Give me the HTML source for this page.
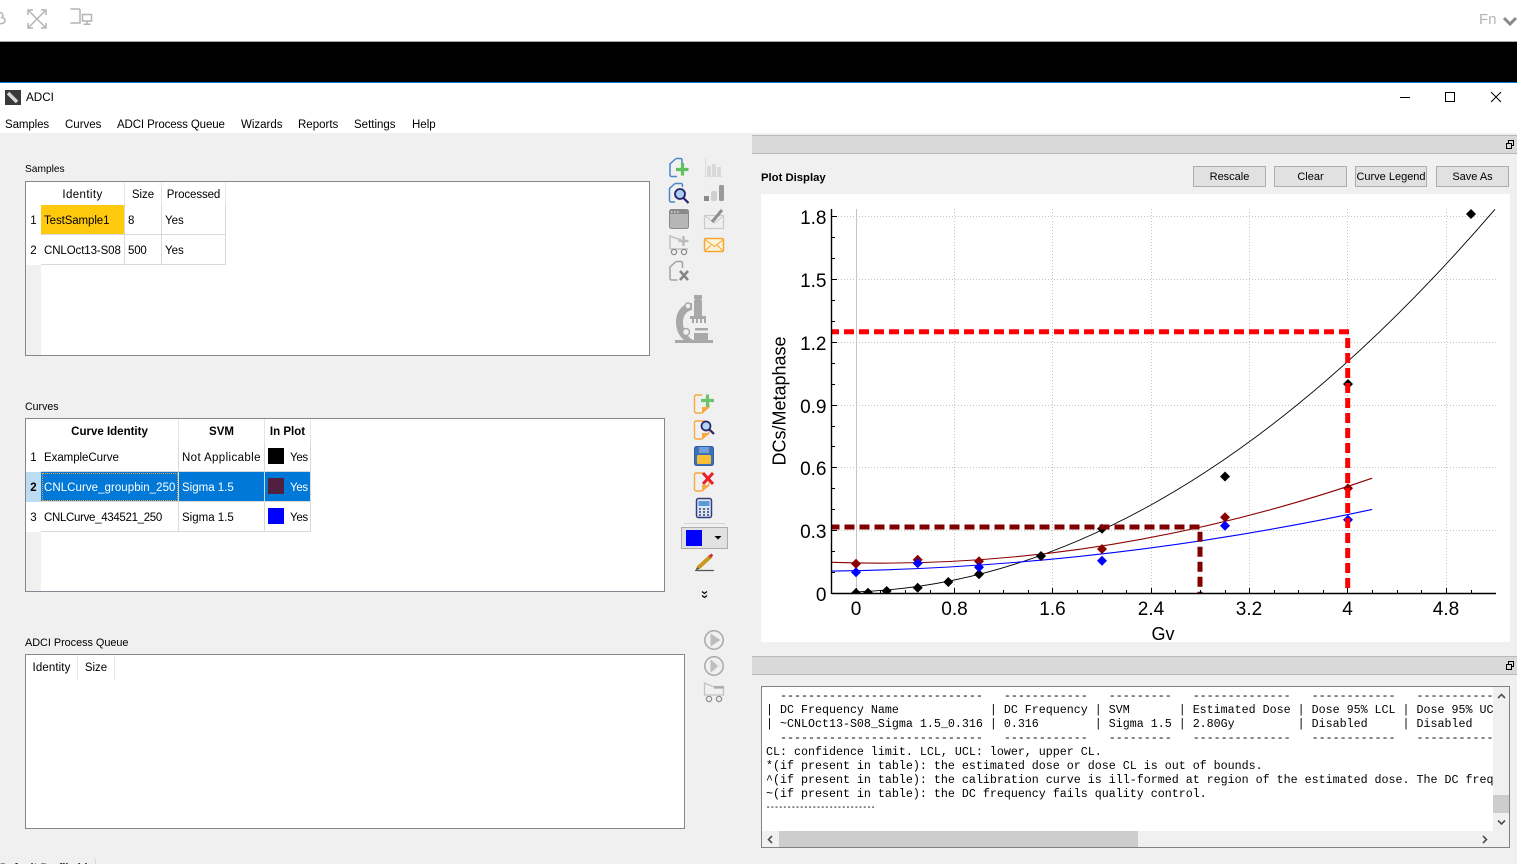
<!DOCTYPE html>
<html lang="en"><head><meta charset="utf-8"><title>ADCI</title>
<style>
html,body{margin:0;padding:0;width:1517px;height:864px;overflow:hidden;background:#f0f0f0}
body{position:relative;font-family:"Liberation Sans",sans-serif;font-size:11.5px;color:#000}
.a{position:absolute}
.t{position:absolute;white-space:nowrap;line-height:14px}
.box{position:absolute;background:#fff;border:1px solid #828790;box-sizing:border-box;overflow:hidden}
.rh{position:absolute;left:0;top:0;width:15px;bottom:0;background:#f0f0f0}
table{position:absolute;left:0;top:0;border-collapse:separate;border-spacing:0;table-layout:fixed}
td,th{box-sizing:border-box;padding:2px 0 0 3px;font-weight:normal;white-space:nowrap;overflow:hidden;text-align:left;background:#fff;border-right:1px solid #d9d9d9;border-bottom:1px solid #d9d9d9}
th{text-align:center;padding:2px 0 0 0;border-bottom:0;border-right:1px solid #e6e6e6}
td.n,th.n{text-align:center;padding:2px 0 0 0;border:0;background:#fff}
th.b{font-weight:bold}
tr.sel td{background:#0078d7;color:#fff}
tr.sel td.n{background:#bcdcf4;color:#000;font-weight:bold}
.sw{display:inline-block;width:16px;height:16px;vertical-align:middle;margin-right:6px;position:relative;top:-2px}
.bar{position:absolute;left:752px;width:765px;height:19px;background:#d9d9d9;border-top:1px solid #b9b9b9;border-bottom:1px solid #b9b9b9;box-sizing:border-box}
.btn{position:absolute;top:166px;height:21px;background:#e1e1e1;border:1px solid #adadad;box-sizing:border-box;text-align:center;line-height:21px;font-size:11px;white-space:nowrap}
pre{position:absolute;margin:0;left:4px;top:2px;font-family:"Liberation Mono",monospace;font-size:11.67px;line-height:14px;color:#000}
</style></head><body>

<div class="a" style="left:0;top:0;width:1517px;height:41px;background:#fff"></div>
<div class="a" style="left:0;top:41px;width:1517px;height:1px;background:#a9a9a9"></div>
<div class="a" style="left:0;top:42px;width:1517px;height:40px;background:#000"></div>
<div class="a" style="left:0;top:82px;width:1517px;height:1px;background:#0078d7"></div>
<div class="a" style="left:0;top:83px;width:1517px;height:50px;background:#fff"></div>
<div class="t" style="left:1479px;top:12px;font-size:15px;line-height:16px;color:#b4b4b4">Fn</div>

<div class="t" style="left:26px;top:91px;font-size:11.7px">ADCI</div>
<div class="t" style="left:5px;top:118px;letter-spacing:-.1px">Samples</div>
<div class="t" style="left:65px;top:118px">Curves</div>
<div class="t" style="left:117px;top:118px;letter-spacing:-.12px">ADCI Process Queue</div>
<div class="t" style="left:241px;top:118px">Wizards</div>
<div class="t" style="left:298px;top:118px">Reports</div>
<div class="t" style="left:354px;top:118px">Settings</div>
<div class="t" style="left:412px;top:118px">Help</div>

<div class="t" style="left:25px;top:163px;font-size:10.2px">Samples</div>
<div class="box" style="left:25px;top:181px;width:625px;height:175px">
  <div class="rh"></div>
  <table style="width:200px">
    <colgroup><col style="width:15px"><col style="width:84px"><col style="width:37px"><col style="width:64px"></colgroup>
    <tr style="height:23px"><th class="n"></th><th style="letter-spacing:.4px">Identity</th><th>Size</th><th style="letter-spacing:-.1px">Processed</th></tr>
    <tr style="height:30px"><td class="n">1</td><td style="background:#ffc90e;letter-spacing:-.1px">TestSample1</td><td>8</td><td>Yes</td></tr>
    <tr style="height:30px"><td class="n">2</td><td style="letter-spacing:-.1px">CNLOct13-S08</td><td style="letter-spacing:-.2px">500</td><td>Yes</td></tr>
  </table>
</div>

<div class="t" style="left:25px;top:400px;font-size:10.6px">Curves</div>
<div class="box" style="left:25px;top:418px;width:640px;height:174px">
  <div class="rh"></div>
  <table style="width:285px">
    <colgroup><col style="width:15px"><col style="width:138px"><col style="width:86px"><col style="width:46px"></colgroup>
    <tr style="height:23px"><th class="n"></th><th class="b">Curve Identity</th><th class="b">SVM</th><th class="b">In Plot</th></tr>
    <tr style="height:30px"><td class="n">1</td><td style="letter-spacing:-.05px">ExampleCurve</td><td style="letter-spacing:.38px">Not Applicable</td><td><span class="sw" style="background:#000"></span><span style="letter-spacing:-.3px">Yes</span></td></tr>
    <tr class="sel" style="height:30px"><td class="n">2</td><td style="outline:1px dotted #f0a040;outline-offset:-2px;letter-spacing:.05px">CNLCurve_groupbin_250</td><td>Sigma 1.5</td><td><span class="sw" style="background:#52203f"></span><span style="letter-spacing:-.3px">Yes</span></td></tr>
    <tr style="height:30px"><td class="n">3</td><td style="letter-spacing:-.32px">CNLCurve_434521_250</td><td>Sigma 1.5</td><td><span class="sw" style="background:#00f"></span><span style="letter-spacing:-.3px">Yes</span></td></tr>
  </table>
</div>

<div class="t" style="left:25px;top:636px;font-size:10.9px;letter-spacing:-.04px">ADCI Process Queue</div>
<div class="box" style="left:25px;top:654px;width:660px;height:175px">
  <table style="width:89px">
    <colgroup><col style="width:52px"><col style="width:37px"></colgroup>
    <tr style="height:24px"><th style="letter-spacing:.1px">Identity</th><th>Size</th></tr>
  </table>
</div>
<div class="t" style="left:0;top:861px;font-weight:bold;font-size:11px;color:#222">Default Profile.bin</div>
<div class="a" style="left:95px;top:859px;width:1px;height:5px;background:#d9d9d9"></div>

<div class="bar" style="top:135px"></div>
<div class="bar" style="top:656px"></div>
<div class="t" style="left:761px;top:171px;font-weight:bold;font-size:11.3px">Plot Display</div>
<div class="btn" style="left:1193px;width:73px">Rescale</div>
<div class="btn" style="left:1274px;width:73px">Clear</div>
<div class="btn" style="left:1355px;width:72px">Curve Legend</div>
<div class="btn" style="left:1436px;width:73px">Save As</div>
<div class="a" style="left:761px;top:194px;width:749px;height:448px;background:#fff"></div>

<div class="box" style="left:761px;top:686px;width:749px;height:162px;border-color:#828282">
  <div class="a" style="left:0;top:0;width:731px;height:144px;overflow:hidden">
<pre>  -----------------------------   ------------   ---------   --------------   ------------   ------------
| DC Frequency Name             | DC Frequency | SVM       | Estimated Dose | Dose 95% LCL | Dose 95% UCL
| ~CNLOct13-S08_Sigma 1.5_0.316 | 0.316        | Sigma 1.5 | 2.80Gy         | Disabled     | Disabled
  -----------------------------   ------------   ---------   --------------   ------------   ------------
CL: confidence limit. LCL, UCL: lower, upper CL.
*(if present in table): the estimated dose or dose CL is out of bounds.
^(if present in table): the calibration curve is ill-formed at region of the estimated dose. The DC frequency
~(if present in table): the DC frequency fails quality control.</pre>
  <div class="t" style="left:4px;top:114px;font-family:'Liberation Mono',monospace;font-size:7px;font-weight:bold">--------------------------</div>
  </div>
  <div class="a" style="left:731px;top:0;width:16px;height:144px;background:#f0f0f0"></div>
  <div class="a" style="left:731px;top:108px;width:16px;height:18px;background:#cdcdcd"></div>
  <div class="a" style="left:0;top:144px;width:747px;height:16px;background:#f0f0f0"></div>
  <div class="a" style="left:17px;top:144px;width:359px;height:16px;background:#cdcdcd"></div>
</div>

<svg class="a" style="left:0;top:0" width="1517" height="864" viewBox="0 0 1517 864" fill="none">
<defs><clipPath id="pc"><rect x="832" y="200" width="670" height="393"/></clipPath></defs>
<!-- top strip icons -->
<g stroke="#b4b4b4" stroke-width="1.5">
  <path d="M0 12.500a3 3 0 0 1 2 5 3 3 0 0 1 0 6l-2 .3"/>
  <path d="M29 11l16 16M45 11L29 27M28 15v-5h5M41 10h5v5M28 23v5h5M41 28h5v-5"/>
  <path d="M80 9H70.500M80 9V23H70.500"/>
  <path d="M82.500 14.500h9v6.500h-9zM87 21v3M83.500 24.300h7"/>
</g>
<path d="M1504 18l6 6 6-6" stroke="#8a8a8a" stroke-width="3"/>
<!-- window icon and controls -->
<rect x="5" y="90" width="16" height="15" fill="#3a3a3a"/>
<path d="M8 93l9 9" stroke="#d8d8d8" stroke-width="3.500"/>
<g stroke="#000" stroke-width="1">
  <path d="M1400 97.500h10"/>
  <rect x="1445.500" y="92.500" width="9" height="9"/>
  <path d="M1491 92l10 10M1501 92l-10 10"/>
</g>
<!-- undock icons -->
<g stroke="#000" stroke-width="1">
  <path d="M1506.500 143.500h5v5h-5zM1508.500 143v-2.500h5v5h-2"/>
  <path d="M1506.500 664.500h5v5h-5zM1508.500 664v-2.500h5v5h-2"/>
</g>
<!-- scrollbar arrows -->
<g stroke="#505050" stroke-width="1.600">
  <path d="M1498 698l3.500-3.500 3.500 3.500"/>
  <path d="M1498 820.500l3.500 3.500 3.500-3.500"/>
  <path d="M772 836l-3.500 3.500 3.500 3.500"/>
  <path d="M1483 836l3.500 3.500-3.500 3.500"/>
</g>

<!-- toolbar: samples -->
<path d="M676 158.500h4.500a1.500 1.500 0 0 1 1.500 1.500v4M676 158.500l-6 5.500v11a1.500 1.500 0 0 0 1.500 1.500H677" stroke="#4a86c8" stroke-width="1.500"/>
<path d="M682.500 163v12.500M676 169.500h12.500" stroke="#5fc05f" stroke-width="3.200"/>
<path d="M675 183.500h6a1.500 1.500 0 0 1 1.500 1.500v2M675 183.500l-5.500 5v12a1.500 1.500 0 0 0 1.500 1.500h4" stroke="#4a86c8" stroke-width="1.500"/>
<circle cx="680" cy="194" r="5" fill="#a9cdf0" stroke="#24246e" stroke-width="1.800"/>
<path d="M683.500 198l5 5" stroke="#24246e" stroke-width="2.200"/>
<g fill="#d8d8d8">
  <rect x="707" y="166" width="4" height="10"/><rect x="712" y="164" width="4" height="12"/><rect x="717" y="167" width="4" height="9"/>
</g>
<path d="M705.500 158v18.500h17" stroke="#dcdcdc"/>
<rect x="704" y="196" width="5" height="5" fill="#8a8a8a"/>
<rect x="711" y="191" width="6" height="10" rx="2" fill="#cfcfcf"/>
<rect x="719" y="185" width="5" height="16" rx="1.500" fill="#9a9a9a"/>
<rect x="669.500" y="209.500" width="19" height="19" rx="2" fill="#b6b6b6" stroke="#8a8a8a"/>
<rect x="670" y="210" width="18" height="4" fill="#8a8a8a"/>
<path d="M671 212h1.500M674 212h1.500M677 212h1.500" stroke="#fff"/>
<rect x="704.500" y="215.500" width="19" height="13" fill="#efefef" stroke="#cacaca" stroke-width="1.200"/>
<path d="M705 216l9.500 7 9-7" stroke="#cacaca"/>
<path d="M712 222l10-12" stroke="#8f8f8f" stroke-width="3"/>
<rect x="704.500" y="238.500" width="19" height="13" rx="1.500" fill="#fff3d8" stroke="#f7a530" stroke-width="1.500"/>
<path d="M705 239.500l9.500 7 9-7M705 251l6-6M723 251l-6-6" stroke="#f7a530"/>
<path d="M670 249v-13l8 3h3" stroke="#b9b9b9" stroke-width="1.300"/>
<path d="M670 249h18" stroke="#b9b9b9" stroke-width="1.300"/>
<path d="M683.500 236v10M678.500 241h10" stroke="#bcbcbc" stroke-width="2.600"/>
<circle cx="674" cy="252" r="2.600" stroke="#8c8c8c" stroke-width="1.300"/>
<circle cx="684" cy="252" r="2.600" stroke="#8c8c8c" stroke-width="1.300"/>
<path d="M676 261.500h5a1.500 1.500 0 0 1 1.500 1.500v5M676 261.500l-6 5.500v11.500a1.500 1.500 0 0 0 1.500 1.500h6" stroke="#a2a2a2" stroke-width="1.500"/>
<path d="M680 271l8 9M688 271l-8 9" stroke="#858585" stroke-width="2.600"/>
<!-- microscope -->
<g fill="#a8a8a8">
  <rect x="675" y="340" width="38" height="3"/>
  <rect x="694" y="295" width="8" height="4"/>
  <rect x="695" y="299" width="6" height="3"/>
  <rect x="694" y="300" width="8" height="17"/>
  <rect x="690" y="316" width="16" height="3"/>
  <rect x="692" y="319" width="2" height="4"/><rect x="696" y="319" width="2" height="4"/><rect x="700" y="319" width="2" height="4"/><rect x="704" y="319" width="2" height="4"/>
  <rect x="695" y="328" width="13" height="2.500"/>
  <rect x="694" y="333" width="14" height="7"/>
  <path d="M692 303c-9 0-16 8-16 19 0 8 3 14 8 18h9c-5-3-10-9-10-18 0-7 4-11 9-12z"/>
</g>
<circle cx="688" cy="306" r="3" fill="#f0f0f0" stroke="#a8a8a8" stroke-width="1.500"/>
<circle cx="686" cy="332" r="3.500" fill="#f0f0f0" stroke="#a8a8a8" stroke-width="1.500"/>

<!-- toolbar: curves -->
<g stroke="#f7a841" stroke-width="1.400">
  <path d="M696 395h6M696 395a1.500 1.500 0 0 0-1.500 1.500v15a1.500 1.500 0 0 0 1.500 1.500h6l7-6v-3"/>
  <path d="M696 421h9M696 421a1.500 1.500 0 0 0-1.500 1.500v15a1.500 1.500 0 0 0 1.500 1.500h6l7-6v-3"/>
  <path d="M696 473h7M696 473a1.500 1.500 0 0 0-1.500 1.500v15a1.500 1.500 0 0 0 1.500 1.500h6l7-6v-4"/>
</g>
<path d="M702 491v-6h7zM702 439v-6h7zM702 413v-6h7z" fill="#f7a841"/>
<path d="M707.500 394.500v12.500M701 400.500h13" stroke="#6dc46d" stroke-width="3.200"/>
<circle cx="706" cy="426" r="4.500" fill="#b5d4ee" stroke="#24246e" stroke-width="1.700"/>
<path d="M709 429l5 5" stroke="#24246e" stroke-width="2.200"/>
<path d="M703 473l10 11M713 473l-10 11" stroke="#e8202a" stroke-width="3"/>
<rect x="694.500" y="446.500" width="19" height="19" rx="2" fill="#3f72b5" stroke="#2f5f9e"/>
<rect x="697" y="455" width="14" height="9" rx="1.500" fill="#f7bf35"/>
<rect x="699" y="447" width="10" height="6" fill="#6fa0d8"/>
<rect x="696.500" y="498.500" width="15" height="19" rx="2" fill="#dfe6f2" stroke="#2f3f7e" stroke-width="1.500"/>
<rect x="698.500" y="501" width="11" height="5" fill="#5b9ad8"/>
<path d="M699 509h2M703 509h2M707 509h2M699 512h2M703 512h2M707 512h2M699 515h2M703 515h2M707 515h2" stroke="#2f3f7e" stroke-width="1.500"/>
<path d="M684 523.500h41" stroke="#d4d4d4"/>
<rect x="681.500" y="527.500" width="46" height="21" fill="#e1e1e1" stroke="#adadad"/>
<rect x="686" y="530" width="16" height="16" fill="#00f"/>
<path d="M714.500 536h7l-3.500 3.500z" fill="#000"/>
<path d="M695 570.500h19" stroke="#555" stroke-width="1.300"/>
<path d="M698 568l13-12" stroke="#c99a1e" stroke-width="4"/>
<path d="M708.500 556l3-2.500 1.800 2-3 2.500z" fill="#d02848"/>
<path d="M696 570l1-3 2 2z" fill="#333"/>
<path d="M702 591.500l2.500 2 2.500-2M702 595.500l2.500 2 2.500-2" stroke="#000" stroke-width="1.200"/>

<!-- toolbar: queue -->
<g stroke="#a8a8a8" stroke-width="1.500">
  <circle cx="714" cy="640" r="9.200"/>
  <circle cx="714" cy="666" r="9.200"/>
</g>
<path d="M710.500 633.500v13l10-6.500z" fill="#bdbdbd"/>
<path d="M710.500 659.500v13l10-6.500z" fill="#bdbdbd"/>
<path d="M713 660.500l6 5.500-6 5.500" stroke="#ececec" stroke-width="1.300"/>
<path d="M704.500 695v-12l8 3.500h11v8.500z" stroke="#c4c4c4" stroke-width="1.300"/>
<path d="M714 687.500h10" stroke="#aaaaaa" stroke-width="2.200"/>
<circle cx="709" cy="699" r="2.600" stroke="#8c8c8c" stroke-width="1.300"/>
<circle cx="719" cy="699" r="2.600" stroke="#8c8c8c" stroke-width="1.300"/>

<!-- plot -->
<g stroke="#c4c4c4" stroke-width="1" stroke-dasharray="1 2">
  <path d="M954.500 209V593M1052.500 209V593M1151.500 209V593M1249.500 209V593M1347.500 209V593M1446.500 209V593"/>
  <path d="M832 216.500H1496M832 279.500H1496M832 342.500H1496M832 405.500H1496M832 467.500H1496M832 530.500H1496"/>
</g>
<path d="M856.500 209V593" stroke="#c4c4c4"/>
<path d="M856 591.900Q1175.500 581 1495 209.300" stroke="#000" stroke-width=".9"/>
<path d="M832 562.300Q1102.100 571.600 1372.200 478.200" stroke="#8b0000" stroke-width="1.100"/>
<path d="M832 571.100Q1102.100 567.500 1372.200 509.400" stroke="#0000ff" stroke-width="1.100"/>
<g clip-path="url(#pc)">
<g fill="#000">
  <path d="M856 588l5 5-5 5-5-5zM868 587.700l5 5-5 5-5-5zM886.700 586l5 5-5 5-5-5zM917.700 582.700l5 5-5 5-5-5zM948.300 577l5 5-5 5-5-5zM979 569.300l5 5-5 5-5-5zM1041 551l5 5-5 5-5-5zM1102 523.700l5 5-5 5-5-5zM1225 471.500l5 5-5 5-5-5zM1348 379l5 5-5 5-5-5zM1471 209l5 5-5 5-5-5z"/>
</g>
<g fill="#8b0000">
  <path d="M856 558.700l5 5-5 5-5-5zM917.700 554.700l5 5-5 5-5-5zM979 556.300l5 5-5 5-5-5zM1102 544l5 5-5 5-5-5zM1225 512.300l5 5-5 5-5-5zM1348 483.300l5 5-5 5-5-5z"/>
</g>
<g fill="#0000ff">
  <path d="M856 567.300l5 5-5 5-5-5zM917.700 558.300l5 5-5 5-5-5zM979 562.300l5 5-5 5-5-5zM1102 555.700l5 5-5 5-5-5zM1225 520.700l5 5-5 5-5-5zM1348 514.700l5 5-5 5-5-5z"/>
</g>
</g>
<g stroke-width="5" stroke-dasharray="10 5">
  <path d="M1349 331.700H832" stroke="#ff0000"/>
  <path d="M1347.700 338V590" stroke="#ff0000"/>
  <path d="M1199.500 527H832" stroke="#800000"/>
  <path d="M1200 531.700V593" stroke="#800000"/>
</g>
<g stroke="#000" stroke-width="1">
  <path d="M832 593.500h664M831.500 209v385" stroke-width="1.400"/>
  <path d="M856.500 593v-5M954.500 593v-5M1052.500 593v-5M1151.500 593v-5M1249.500 593v-5M1347.500 593v-5M1446.500 593v-5"/>
  <path d="M880.500 593v-3M905.500 593v-3M930.500 593v-3M979.500 593v-3M1003.500 593v-3M1028.500 593v-3M1077.500 593v-3M1102.500 593v-3M1126.500 593v-3M1175.500 593v-3M1200.500 593v-3M1225.500 593v-3M1274.500 593v-3M1298.500 593v-3M1323.500 593v-3M1372.500 593v-3M1397.500 593v-3M1421.500 593v-3M1471.500 593v-3"/>
  <path d="M832 216.500h5M832 279.500h5M832 342.500h5M832 405.500h5M832 467.500h5M832 530.500h5"/>
  <path d="M832 237.500h3M832 258.500h3M832 300.500h3M832 321.500h3M832 363.500h3M832 384.500h3M832 426.500h3M832 446.500h3M832 488.500h3M832 509.500h3M832 551.500h3M832 572.500h3"/>
</g>
<g fill="#000" font-family="'Liberation Sans',sans-serif" font-size="19">
  <g text-anchor="end">
    <text x="826.500" y="224">1.8</text><text x="826.500" y="287">1.5</text><text x="826.500" y="350">1.2</text>
    <text x="826.500" y="413">0.9</text><text x="826.500" y="475">0.6</text><text x="826.500" y="538">0.3</text><text x="826.500" y="601">0</text>
  </g>
  <g text-anchor="middle">
    <text x="856" y="615">0</text><text x="954.500" y="615">0.8</text><text x="1052.500" y="615">1.6</text>
    <text x="1151" y="615">2.4</text><text x="1249" y="615">3.2</text><text x="1347.500" y="615">4</text><text x="1446" y="615">4.8</text>
    <text x="1163" y="640" font-size="18">Gv</text>
    <text transform="translate(785.500 401) rotate(-90)" font-size="18">DCs/Metaphase</text>
  </g>
</g>
</svg>
</body></html>
